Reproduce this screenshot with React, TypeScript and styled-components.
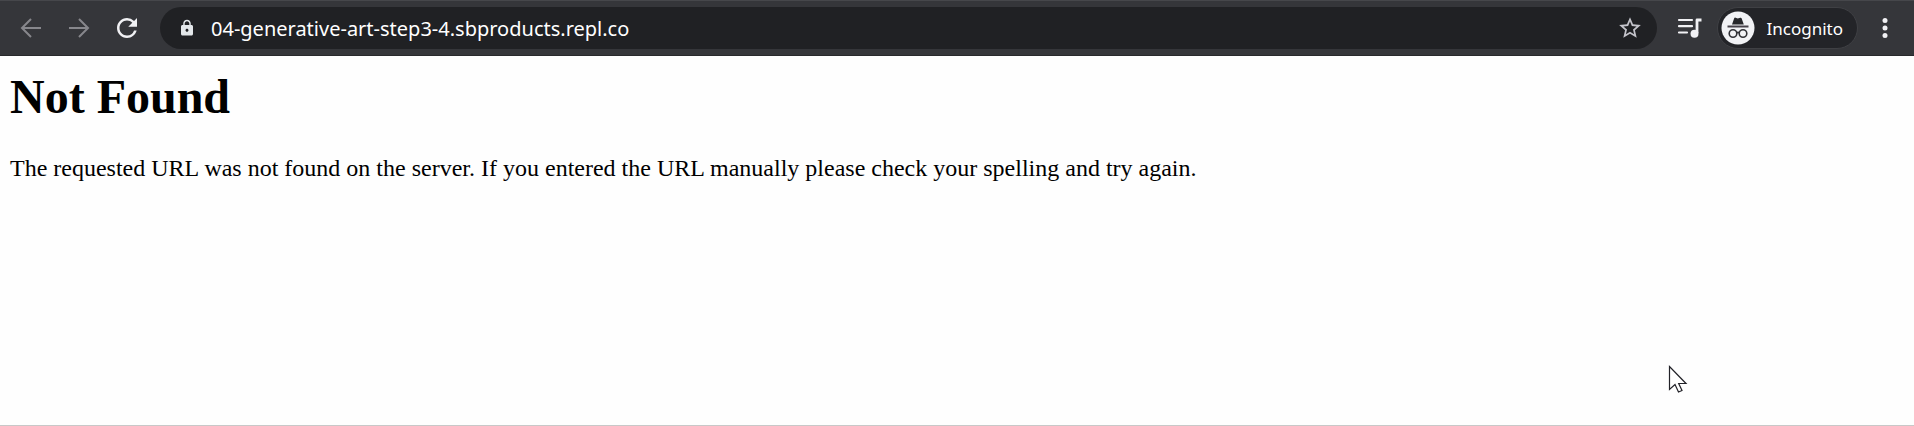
import React from "react";
import styled, { createGlobalStyle } from "styled-components";
import { MdLock, MdRefresh, MdStarBorder } from "react-icons/md";

const GlobalStyle = createGlobalStyle`
  * { box-sizing: border-box; }
  body { margin: 0; background: #fefefe; }
`;

const Window = styled.div`
  position: relative;
  display: flex;
  flex-direction: column;
  min-height: 100vh;
  border-bottom: 1px solid #c8c8c8;
`;

const Toolbar = styled.header`
  display: flex;
  align-items: center;
  height: 56px;
  padding: 0 13px 0 15px;
  background: #35363a;
  border-top: 1px solid #46474b;
  border-bottom: 1px solid #28292c;
  font-family: "Segoe UI", "Noto Sans", sans-serif;
`;

const Navigation = styled.nav`
  display: flex;
  gap: 16px;
  margin-right: 17px;
`;

const IconButton = styled.button<{ $color?: string }>`
  display: flex;
  align-items: center;
  justify-content: center;
  width: 32px;
  height: 32px;
  flex: none;
  padding: 0;
  border: 0;
  background: none;
  color: ${(p) => p.$color ?? "#f1f1f4"};
`;

const AddressBar = styled.label`
  display: flex;
  align-items: center;
  flex: 1;
  min-width: 0;
  height: 42px;
  margin-right: 17px;
  padding: 0 11px 0 18px;
  border-radius: 21px;
  background: #202124;
  color: #e3e7ea;
`;

const AddressInput = styled.input`
  flex: 1;
  min-width: 0;
  height: 32px;
  margin-left: 15px;
  padding: 0;
  border: 0;
  outline: 0;
  background: none;
  color: #fff;
  font-family: inherit;
  font-size: 20px;
`;

const IncognitoChip = styled.button`
  display: flex;
  align-items: center;
  gap: 12px;
  height: 42px;
  margin: 0 11px;
  padding: 0 14px 0 3px;
  border: 1px solid #3f4044;
  border-radius: 21px;
  background: #232428;
  color: #fff;
  font-family: inherit;
  font-size: 17px;
`;

const Page = styled.main`
  flex: 1;
  padding: 13px 10px;
  color: #000;
  font-family: "Times New Roman", "Liberation Serif", serif;
  font-size: 24px;
`;

const Title = styled.h1`
  margin: 0 0 29px;
  font-size: 48px;
  line-height: 56px;
`;

const Message = styled.p`
  margin: 0;
  line-height: 28px;
`;

const Pointer = styled.svg`
  position: absolute;
  right: 226px;
  bottom: 31px;
  pointer-events: none;
`;

const BackIcon = () => (
  <svg width="22" height="22" viewBox="0 0 22 22" fill="none" stroke="currentColor" strokeWidth="2" aria-hidden="true">
    <path d="M21 11H2M11 2L2 11l9 9" />
  </svg>
);

const ForwardIcon = () => (
  <svg width="22" height="22" viewBox="0 0 22 22" fill="none" stroke="currentColor" strokeWidth="2" aria-hidden="true">
    <path d="M1 11h19M11 2l9 9-9 9" />
  </svg>
);

const QueueIcon = () => (
  <svg width="26" height="22" viewBox="0 0 26 22" fill="none" stroke="currentColor" strokeWidth="2.2" strokeLinecap="round" aria-hidden="true">
    <path d="M2 3h13M2 9.2h13M2 15.5h8" />
    <path d="M20 16V3h4.500" strokeWidth="2.800" strokeLinecap="butt" strokeLinejoin="round" />
    <circle cx="17.500" cy="16.700" r="4" fill="currentColor" stroke="none" />
  </svg>
);

const IncognitoIcon = () => (
  <svg width="34" height="34" viewBox="0 0 34 34" fill="none" aria-hidden="true">
    <circle cx="17" cy="17" r="16.500" fill="#f1f2f5" />
    <path d="M11 13.500l2.200-6.200q.4-1 1.400-.6l2.200.7 2.400-.7q1-.3 1.400.6l2.200 6.200z" fill="#26272b" />
    <path d="M6.500 15.500h21" stroke="#46424a" strokeWidth="2" />
    <g stroke="#303136" strokeWidth="1.600">
      <circle cx="12" cy="22.500" r="3.800" />
      <circle cx="22" cy="22.500" r="3.800" />
      <path d="M15.600 22q1.400-1.200 2.800 0" />
    </g>
  </svg>
);

const MenuIcon = () => (
  <svg width="6" height="22" viewBox="0 0 6 22" fill="currentColor" aria-hidden="true">
    <circle cx="3" cy="3.500" r="2.500" />
    <circle cx="3" cy="11" r="2.500" />
    <circle cx="3" cy="18.500" r="2.500" />
  </svg>
);

export default function App() {
  return (
    <Window>
      <GlobalStyle />
      <Toolbar>
        <Navigation aria-label="History">
          <IconButton $color="#87878c" aria-label="Back"><BackIcon /></IconButton>
          <IconButton $color="#87878c" aria-label="Forward"><ForwardIcon /></IconButton>
          <IconButton aria-label="Reload"><MdRefresh size={30} /></IconButton>
        </Navigation>
        <AddressBar>
          <MdLock size={18} />
          <AddressInput
            type="text"
            aria-label="Address"
            spellCheck={false}
            defaultValue="04-generative-art-step3-4.sbproducts.repl.co"
          />
          <IconButton $color="#c4c4cb" aria-label="Bookmark"><MdStarBorder size={26} /></IconButton>
        </AddressBar>
        <IconButton aria-label="Media controls"><QueueIcon /></IconButton>
        <IncognitoChip>
          <IncognitoIcon />
          Incognito
        </IncognitoChip>
        <IconButton aria-label="Menu"><MenuIcon /></IconButton>
      </Toolbar>
      <Page>
        <Title>Not Found</Title>
        <Message>
          The requested URL was not found on the server. If you entered the URL manually please check your spelling and try again.
        </Message>
      </Page>
      <Pointer width="20" height="29" viewBox="0 0 20 29" fill="#fff" stroke="#222228" strokeWidth="1.200" aria-hidden="true">
        <path d="M1.500 1.500v23l5.500-5 3.500 7.500 3.500-1.500-3.300-7h7.300z" />
      </Pointer>
    </Window>
  );
}
